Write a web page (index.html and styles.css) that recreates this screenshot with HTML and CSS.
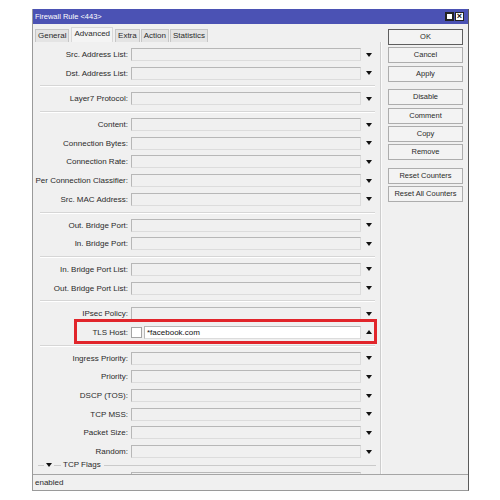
FILE: index.html
```html
<!DOCTYPE html>
<html>
<head>
<meta charset="utf-8">
<link rel="stylesheet" href="styles.css">
</head>
<body>
<div class="window">
  <div class="titlebar">
    <span class="title">Firewall Rule &lt;443&gt;</span>
    <div class="tbtns"><span class="tb max"></span><span class="tb close">×</span></div>
  </div>
  <div class="main">
    <div class="left">
      <div class="tabs">
        <span class="tab">General</span>
        <span class="tab active">Advanced</span>
        <span class="tab">Extra</span>
        <span class="tab">Action</span>
        <span class="tab">Statistics</span>
      </div>
      <div class="form">
        <div class="row"><span class="lbl">Src. Address List:</span><span class="fld"></span><span class="dd"></span></div>
        <div class="row"><span class="lbl">Dst. Address List:</span><span class="fld"></span><span class="dd"></span></div>
        <div class="sep"></div>
        <div class="row"><span class="lbl">Layer7 Protocol:</span><span class="fld"></span><span class="dd"></span></div>
        <div class="sep"></div>
        <div class="row"><span class="lbl">Content:</span><span class="fld"></span><span class="dd"></span></div>
        <div class="row"><span class="lbl">Connection Bytes:</span><span class="fld"></span><span class="dd"></span></div>
        <div class="row"><span class="lbl">Connection Rate:</span><span class="fld"></span><span class="dd"></span></div>
        <div class="row"><span class="lbl">Per Connection Classifier:</span><span class="fld"></span><span class="dd"></span></div>
        <div class="row"><span class="lbl">Src. MAC Address:</span><span class="fld"></span><span class="dd"></span></div>
        <div class="sep"></div>
        <div class="row"><span class="lbl">Out. Bridge Port:</span><span class="fld"></span><span class="dd"></span></div>
        <div class="row"><span class="lbl">In. Bridge Port:</span><span class="fld"></span><span class="dd"></span></div>
        <div class="sep"></div>
        <div class="row"><span class="lbl">In. Bridge Port List:</span><span class="fld"></span><span class="dd"></span></div>
        <div class="row"><span class="lbl">Out. Bridge Port List:</span><span class="fld"></span><span class="dd"></span></div>
        <div class="sep"></div>
        <div class="row"><span class="lbl">IPsec Policy:</span><span class="fld"></span><span class="dd"></span></div>
        <div class="row"><span class="lbl">TLS Host:</span><span class="chk"></span><span class="fld white">*facebook.com</span><span class="dd up"></span><span class="hl"></span></div>
        <div class="sep"></div>
        <div class="row"><span class="lbl">Ingress Priority:</span><span class="fld"></span><span class="dd"></span></div>
        <div class="row"><span class="lbl">Priority:</span><span class="fld"></span><span class="dd"></span></div>
        <div class="row"><span class="lbl">DSCP (TOS):</span><span class="fld"></span><span class="dd"></span></div>
        <div class="row"><span class="lbl">TCP MSS:</span><span class="fld"></span><span class="dd"></span></div>
        <div class="row"><span class="lbl">Packet Size:</span><span class="fld"></span><span class="dd"></span></div>
        <div class="row"><span class="lbl">Random:</span><span class="fld"></span><span class="dd"></span></div>
        <div class="sect"><span class="sarrow"></span><span class="stext">TCP Flags</span></div>
        <div class="row"><span class="lbl"></span><span class="fld"></span></div>
      </div>
    </div>
    <div class="vsep"></div>
    <div class="right">
      <div class="btn ok">OK</div>
      <div class="btn">Cancel</div>
      <div class="btn">Apply</div>
      <div class="btn gap">Disable</div>
      <div class="btn">Comment</div>
      <div class="btn">Copy</div>
      <div class="btn">Remove</div>
      <div class="btn gap">Reset Counters</div>
      <div class="btn">Reset All Counters</div>
    </div>
  </div>
  <div class="status">enabled</div>
</div>
</body>
</html>
```

FILE: styles.css
```css
* { box-sizing: border-box; }
body {
  margin: 0;
  background: #fff;
  font-family: "Liberation Sans", Arial, sans-serif;
  font-size: 8px;
  color: #2a2a2a;
}
.window {
  margin: 9px 0 0 32px;
  width: 437px;
  height: 482px;
  background: #f0f0f0;
  border-left: 1px solid #9a9a9a;
  border-right: 1px solid #5a5a5a;
  border-bottom: 1px solid #9a9a9a;
  display: flex;
  flex-direction: column;
}
.titlebar {
  height: 15px;
  background: #4b52b4;
  color: #fff;
  font-size: 7.5px;
  display: flex;
  align-items: center;
  justify-content: space-between;
  padding: 0 4px 0 2px;
}
.tbtns { display: flex; gap: 1px; }
.tb {
  width: 9px;
  height: 9px;
  background: #fff;
  border: 1px solid #222;
  display: flex;
  align-items: center;
  justify-content: center;
  color: #111;
  font-size: 9px;
  font-weight: bold;
  line-height: 7px;
}
.max::after {
  content: "";
  width: 5px;
  height: 5px;
  border: 1px solid #222;
}
.main { display: flex; height: 450px; }
.left { width: 347px; display: flex; flex-direction: column; }
.tabs {
  height: 18px;
  padding: 3px 0 0 2px;
  display: flex;
  align-items: flex-end;
  gap: 1px;
}
.tab {
  height: 13px;
  padding: 0 2px;
  border: 1px solid #c6c6c6;
  border-bottom: none;
  background: #e4e4e4;
  line-height: 12px;
  white-space: nowrap;
}
.tab.active {
  height: 15px;
  background: #f4f4f4;
  border-color: #d8d8d8;
  line-height: 12px;
  margin: 0 1px;
}
.form {
  height: 432px;
  overflow: hidden;
  padding-top: 3px;
}
.row {
  display: flex;
  height: 18.7px;
  padding-top: 3px;
  position: relative;
}
.lbl {
  width: 95px;
  flex: none;
  height: 13px;
  line-height: 13px;
  white-space: nowrap;
  display: flex;
  justify-content: flex-end;
}
.fld {
  margin-left: 3px;
  width: 230px;
  height: 13px;
  flex: none;
  border: 1px solid;
  border-color: #b7b7b7 #dcdcdc #dcdcdc #b7b7b7;
  background: #f0f0f0;
}
.fld.white {
  width: 217px;
  margin-left: 2px;
  background: #fff;
  padding-left: 2px;
  line-height: 11px;
  color: #111;
}
.chk {
  margin-left: 3px;
  margin-top: 1px;
  width: 11px;
  height: 11px;
  flex: none;
  background: #fff;
  border: 1px solid #a4a4a4;
}
.dd {
  width: 16px;
  height: 13px;
  display: flex;
  align-items: center;
  justify-content: center;
}
.dd::after {
  content: "";
  border-left: 3.5px solid transparent;
  border-right: 3.5px solid transparent;
  border-top: 4px solid #111;
}
.dd.up::after {
  border-top: none;
  border-bottom: 4px solid #111;
}
.hl {
  position: absolute;
  left: 41px;
  top: -4px;
  width: 303px;
  height: 25px;
  border: 3px solid #e1252b;
}
.sep {
  height: 7px;
  padding-top: 3px;
  margin: 0 5px 0 7px;
}
.sep::before {
  content: "";
  display: block;
  height: 1px;
  background: #d6d6d6;
  box-shadow: 0 1px 0 #fff;
}
.sect {
  height: 8px;
  margin: 0 4px 0 5px;
  display: flex;
  align-items: center;
  position: relative;
}
.sect::before {
  content: "";
  position: absolute;
  left: 0;
  right: 0;
  top: 4px;
  height: 1px;
  background: #cacaca;
}
.sarrow {
  position: relative;
  margin-left: 6px;
  padding: 0 2px;
  background: #f0f0f0;
  display: flex;
  align-items: center;
}
.sarrow::after {
  content: "";
  border-left: 3.5px solid transparent;
  border-right: 3.5px solid transparent;
  border-top: 4px solid #111;
}
.stext {
  position: relative;
  margin-left: 7px;
  padding: 0 3px 0 2px;
  background: #f0f0f0;
  line-height: 8px;
}
.vsep {
  width: 2px;
  margin-top: 18px;
  border-left: 1px solid #cdcdcd;
  background: #fafafa;
}
.right {
  width: 86px;
  padding: 5px 5px 0 6px;
  display: flex;
  flex-direction: column;
}
.btn {
  height: 16px;
  margin-bottom: 2.3px;
  border: 1px solid #adadad;
  background: #f3f3f3;
  text-align: center;
  line-height: 14px;
  font-size: 7.5px;
  white-space: nowrap;
}
.btn.ok { border-color: #5e5e5e; }
.btn.gap { margin-top: 5.5px; }
.status {
  height: 16px;
  border-top: 1px solid #a5a5a5;
  padding-left: 2px;
  line-height: 15px;
}
```
